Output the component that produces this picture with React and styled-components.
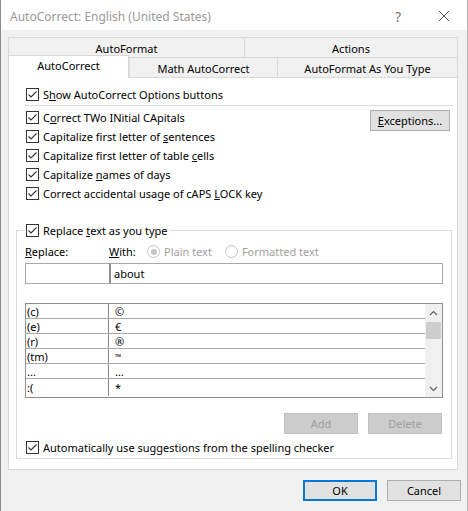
import styled, { createGlobalStyle } from "styled-components";

const GlobalStyle = createGlobalStyle`
  html, body {
    margin: 0;
    padding: 0;
    background: #f0f0f0;
  }
  body {
    font-family: "Noto Sans", "Open Sans", sans-serif;
    font-size: 11px;
    color: #000;
  }
  u { text-underline-offset: 1px; }
`;

const options = [
  <>C<u>o</u>rrect TWo INitial CApitals</>,
  <>Capitalize first letter of <u>s</u>entences</>,
  <>Capitalize first letter of table <u>c</u>ells</>,
  <>Capitalize <u>n</u>ames of days</>,
  <>Correct accidental usage of cAPS <u>L</u>OCK key</>,
];

const entries = [
  ["(c)", "©"],
  ["(e)", "€"],
  ["(r)", "®"],
  ["(tm)", "™"],
  ["...", "…"],
  [":(", "*"],
];

function Check() {
  return (
    <CheckBox>
      <svg width="11" height="11" viewBox="0 0 11 11">
        <path d="M1.5 5.5 L4 8 L9.5 2.5" fill="none" stroke="#333" strokeWidth="1.1" />
      </svg>
    </CheckBox>
  );
}

export default function App() {
  return (
    <Window>
      <GlobalStyle />
      <TitleBar>
        <Title>AutoCorrect: English (United States)</Title>
        <TitleButton>?</TitleButton>
        <TitleButton>
          <svg width="12" height="12" viewBox="0 0 12 12">
            <path d="M1 1 L11 11 M11 1 L1 11" stroke="#555" strokeWidth="1" />
          </svg>
        </TitleButton>
      </TitleBar>

      <Body>
        <TabRow>
          <Tab w={236}>AutoFormat</Tab>
          <Tab w={214} last>Actions</Tab>
        </TabRow>
        <TabRow>
          <Tab w={121} active>AutoCorrect</Tab>
          <Tab w={148}>Math AutoCorrect</Tab>
          <Tab w={181} last>AutoFormat As You Type</Tab>
        </TabRow>

        <Panel>
          <TopSection>
            <OptionRow><Check /><span>S<u>h</u>ow AutoCorrect Options buttons</span></OptionRow>
            <Separator />
            <OptionsArea>
              <div>
                {options.map((o, i) => (
                  <OptionRow key={i}><Check /><span>{o}</span></OptionRow>
                ))}
              </div>
              <Button w={80} top={2}><span><u>E</u>xceptions...</span></Button>
            </OptionsArea>
          </TopSection>

          <Group>
            <Legend><Check /><span>Replace <u>t</u>ext as you type</span></Legend>
            <LabelRow>
              <FieldLabel w={84}><u>R</u>eplace:</FieldLabel>
              <FieldLabel w={38}><u>W</u>ith:</FieldLabel>
              <Radio checked />
              <RadioText>Plain text</RadioText>
              <Radio />
              <RadioText>Formatted text</RadioText>
            </LabelRow>
            <InputRow>
              <Input w={84} />
              <Input wide>about</Input>
            </InputRow>
            <List>
              <Rows>
                {entries.map(([a, b], i) => (
                  <ListRow key={i} last={i === entries.length - 1}>
                    <KeyCell>{a}</KeyCell>
                    <ValueCell small={b === "™"}>{b}</ValueCell>
                  </ListRow>
                ))}
              </Rows>
              <ScrollBar>
                <Arrow>
                  <svg width="9" height="6" viewBox="0 0 9 6">
                    <path d="M1 5 L4.5 1.5 L8 5" fill="none" stroke="#606060" strokeWidth="1.2" />
                  </svg>
                </Arrow>
                <Track>
                  <Thumb />
                </Track>
                <Arrow>
                  <svg width="9" height="6" viewBox="0 0 9 6">
                    <path d="M1 1 L4.5 4.5 L8 1" fill="none" stroke="#606060" strokeWidth="1.2" />
                  </svg>
                </Arrow>
              </ScrollBar>
            </List>
            <ActionRow>
              <Button w={74} disabled>Add</Button>
              <Button w={74} disabled>Delete</Button>
            </ActionRow>
            <OptionRow spaced><Check /><span>Automatically use su<u>g</u>gestions from the spelling checker</span></OptionRow>
          </Group>
        </Panel>

        <Footer>
          <Button w={74} h={21} primary>OK</Button>
          <Button w={74} h={21}>Cancel</Button>
        </Footer>
      </Body>
    </Window>
  );
}

const Window = styled.div`
  width: 468px;
  height: 511px;
  box-sizing: border-box;
  border-left: 1px solid #8c8c8c;
  border-right: 1px solid #b5b5b5;
  background: #f0f0f0;
  display: flex;
  flex-direction: column;
  overflow: hidden;
`;

const TitleBar = styled.div`
  height: 30px;
  background: #fff;
  display: flex;
  align-items: center;
  padding-left: 9px;
`;

const Title = styled.div`
  flex: 1;
  color: #999;
  font-size: 12px;
  padding-top: 2px;
`;

const TitleButton = styled.div`
  width: 46px;
  height: 30px;
  display: flex;
  align-items: center;
  justify-content: center;
  color: #777;
  font-size: 14px;
  padding-top: 2px;
`;

const Body = styled.div`
  padding: 8px 6px 0 7px;
  display: flex;
  flex-direction: column;
`;

const TabRow = styled.div`
  display: flex;
  align-items: flex-end;
  width: 450px;
  height: 19px;
  &:nth-child(2) { height: 20px; }
`;

const Tab = styled.div`
  width: ${p => p.w}px;
  box-sizing: border-box;
  height: ${p => (p.active ? 23 : 20)}px;
  margin-bottom: ${p => (p.active ? -1 : 0)}px;
  position: ${p => (p.active ? "relative" : "static")};
  z-index: ${p => (p.active ? 1 : 0)};
  background: ${p => (p.active ? "#fff" : "#f0f0f0")};
  border: 1px solid #d9d9d9;
  border-bottom: none;
  border-right: ${p => (p.last || p.active ? "1px solid #d9d9d9" : "none")};
  display: flex;
  align-items: center;
  justify-content: center;
  padding-top: ${p => (p.active ? 0 : 1)}px;
  padding-bottom: ${p => (p.active ? 3 : 0)}px;
`;

const Panel = styled.div`
  width: 450px;
  box-sizing: border-box;
  background: #fff;
  border: 1px solid #d9d9d9;
  padding: 7px 5px 10px 7px;
  display: flex;
  flex-direction: column;
`;

const TopSection = styled.div`
  padding-left: 9px;
`;

const OptionRow = styled.div`
  height: 19px;
  display: flex;
  align-items: center;
  white-space: nowrap;
  margin-top: ${p => (p.spaced ? 4 : 0)}px;
`;

const CheckBox = styled.span`
  width: 11px;
  height: 11px;
  border: 1px solid #333;
  background: #fff;
  margin: 0 4px 0 1px;
  display: flex;
  flex-shrink: 0;
`;

const Separator = styled.div`
  height: 1px;
  background: #dcdcdc;
  margin: 1px -1px 2px 0;
`;

const OptionsArea = styled.div`
  display: flex;
  justify-content: space-between;
  align-items: flex-start;
  padding-right: 2px;
`;

const Button = styled.div`
  width: ${p => p.w}px;
  height: ${p => p.h || 21}px;
  box-sizing: border-box;
  margin-top: ${p => p.top || 0}px;
  background: ${p => (p.disabled ? "#cccccc" : "#e1e1e1")};
  color: ${p => (p.disabled ? "#a0a0a0" : "#000")};
  border: ${p => (p.primary ? "2px solid #0078d7" : p.disabled ? "1px solid #bfbfbf" : "1px solid #adadad")};
  display: flex;
  align-items: center;
  justify-content: center;
  white-space: nowrap;
`;

const Group = styled.fieldset`
  margin: 18px 0 0 0;
  padding: 0 8px 1px 8px;
  border: 1px solid #dcdcdc;
  min-width: 0;
`;

const Legend = styled.legend`
  padding: 0 2px 0 0;
  height: 19px;
  display: flex;
  align-items: center;
`;

const LabelRow = styled.div`
  margin-top: 2px;
  height: 19px;
  display: flex;
  align-items: center;
`;

const FieldLabel = styled.div`
  width: ${p => p.w}px;
`;

const Radio = styled.span`
  width: 11px;
  height: 11px;
  border-radius: 50%;
  border: 1px solid #c4c4c4;
  margin-right: 4px;
  display: flex;
  align-items: center;
  justify-content: center;
  &::after {
    content: "";
    width: 6px;
    height: 6px;
    border-radius: 50%;
    background: ${p => (p.checked ? "#c4c4c4" : "transparent")};
  }
`;

const RadioText = styled.span`
  color: #a0a0a0;
  margin-right: 13px;
`;

const InputRow = styled.div`
  margin-top: 2px;
  display: flex;
  height: 21px;
`;

const Input = styled.div`
  box-sizing: border-box;
  width: ${p => (p.wide ? "auto" : `${p.w}px`)};
  flex: ${p => (p.wide ? 1 : "none")};
  border: 1px solid #a9a9a9;
  border-left: ${p => (p.wide ? "2px solid #8f8f8f" : "1px solid #a9a9a9")};
  border-right: ${p => (p.wide ? "1px solid #a9a9a9" : "none")};
  display: flex;
  align-items: center;
  padding-left: 3px;
`;

const List = styled.div`
  margin-top: 19px;
  height: 95px;
  box-sizing: border-box;
  border: 1px solid #8f8f8f;
  display: flex;
`;

const Rows = styled.div`
  flex: 1;
  display: flex;
  flex-direction: column;
`;

const ListRow = styled.div`
  height: ${p => (p.last ? 17 : 14)}px;
  border-bottom: ${p => (p.last ? "none" : "1px solid #a8a8a8")};
  display: flex;
  align-items: center;
`;

const KeyCell = styled.div`
  width: 82px;
  padding-left: 1px;
  box-sizing: border-box;
`;

const ValueCell = styled.div`
  flex: 1;
  height: 100%;
  border-left: 1px solid #8a8a8a;
  padding-left: 6px;
  display: flex;
  align-items: center;
  font-size: ${p => (p.small ? "8px" : "11px")};
`;

const ScrollBar = styled.div`
  width: 17px;
  background: #f0f0f0;
  display: flex;
  flex-direction: column;
`;

const Arrow = styled.div`
  height: 17px;
  display: flex;
  align-items: center;
  justify-content: center;
`;

const Track = styled.div`
  flex: 1;
  padding: 1px 1px 0 1px;
`;

const Thumb = styled.div`
  height: 17px;
  background: #cdcdcd;
`;

const ActionRow = styled.div`
  margin-top: 15px;
  display: flex;
  justify-content: flex-end;
  gap: 10px;
  padding-right: 1px;
`;

const Footer = styled.div`
  margin-top: 10px;
  display: flex;
  justify-content: flex-end;
  gap: 10px;
`;
